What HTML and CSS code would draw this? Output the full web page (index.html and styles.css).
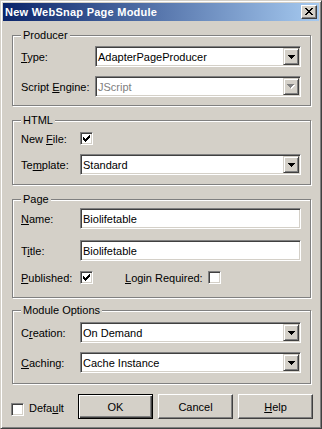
FILE: index.html
```html
<!doctype html>
<html>
    <head>
        <meta charset="utf-8">
        <title>New WebSnap Page Module</title>
        <link rel="stylesheet" href="styles.css">
    </head>
    <body>
        <div class="window">
            <div class="titlebar">
                <span class="title">New WebSnap Page Module</span>
                <div class="close">
                    <svg width="8" height="7" viewBox="0 0 8 7" shape-rendering="crispEdges"><path d="M0 0h2v1H0zM6 0h2v1H6zM1 1h2v1H1zM5 1h2v1H5zM2 2h4v1H2zM3 3h2v1H3zM2 4h4v1H2zM1 5h2v1H1zM5 5h2v1H5zM0 6h2v1H0zM6 6h2v1H6z"/></svg>
                </div>
            </div>
            <div class="content">
                <div class="group producer">
                    <span class="legend">Producer</span>
                    <div class="row">
                        <span class="lbl"><u>T</u>ype:</span>
                        <div class="combo">
                            <span class="val">AdapterPageProducer</span>
                            <div class="drop"><svg width="7" height="4" viewBox="0 0 7 4" shape-rendering="crispEdges"><path d="M0 0h7v1H0zM1 1h5v1H1zM2 2h3v1H2zM3 3h1v1H3z"/></svg></div>
                        </div>
                    </div>
                    <div class="row">
                        <span class="lbl">Script <u>E</u>ngine:</span>
                        <div class="combo disabled">
                            <span class="val">JScript</span>
                            <div class="drop"><svg width="8" height="5" viewBox="0 0 8 5" shape-rendering="crispEdges"><path fill="#fff" d="M1 1h7v1H1zM2 2h5v1H2zM3 3h3v1H3zM4 4h1v1H4z"/><path fill="#808080" d="M0 0h7v1H0zM1 1h5v1H1zM2 2h3v1H2zM3 3h1v1H3z"/></svg></div>
                        </div>
                    </div>
                </div>

                <div class="group html">
                    <span class="legend">HTML</span>
                    <div class="row">
                        <span class="lbl">New <u>F</u>ile:</span>
                        <div class="chk"><svg width="7" height="7" viewBox="0 0 7 7" shape-rendering="crispEdges"><path d="M0 2h1v3H0zM1 3h1v3H1zM2 4h1v3H2zM3 3h1v3H3zM4 2h1v3H4zM5 1h1v3H5zM6 0h1v3H6z"/></svg></div>
                    </div>
                    <div class="row">
                        <span class="lbl">Te<u>m</u>plate:</span>
                        <div class="combo">
                            <span class="val">Standard</span>
                            <div class="drop"><svg width="7" height="4" viewBox="0 0 7 4" shape-rendering="crispEdges"><path d="M0 0h7v1H0zM1 1h5v1H1zM2 2h3v1H2zM3 3h1v1H3z"/></svg></div>
                        </div>
                    </div>
                </div>

                <div class="group page">
                    <span class="legend">Page</span>
                    <div class="row">
                        <span class="lbl"><u>N</u>ame:</span>
                        <div class="edit">Biolifetable</div>
                    </div>
                    <div class="row">
                        <span class="lbl">T<u>i</u>tle:</span>
                        <div class="edit">Biolifetable</div>
                    </div>
                    <div class="row checks">
                        <span class="lbl"><u>P</u>ublished:</span>
                        <div class="chk"><svg width="7" height="7" viewBox="0 0 7 7" shape-rendering="crispEdges"><path d="M0 2h1v3H0zM1 3h1v3H1zM2 4h1v3H2zM3 3h1v3H3zM4 2h1v3H4zM5 1h1v3H5zM6 0h1v3H6z"/></svg></div>
                        <span class="lbl login"><u>L</u>ogin Required:</span>
                        <div class="chk"></div>
                    </div>
                </div>

                <div class="group module">
                    <span class="legend">Module Options</span>
                    <div class="row">
                        <span class="lbl">C<u>r</u>eation:</span>
                        <div class="combo">
                            <span class="val">On Demand</span>
                            <div class="drop"><svg width="7" height="4" viewBox="0 0 7 4" shape-rendering="crispEdges"><path d="M0 0h7v1H0zM1 1h5v1H1zM2 2h3v1H2zM3 3h1v1H3z"/></svg></div>
                        </div>
                    </div>
                    <div class="row">
                        <span class="lbl"><u>C</u>aching:</span>
                        <div class="combo">
                            <span class="val">Cache Instance</span>
                            <div class="drop"><svg width="7" height="4" viewBox="0 0 7 4" shape-rendering="crispEdges"><path d="M0 0h7v1H0zM1 1h5v1H1zM2 2h3v1H2zM3 3h1v1H3z"/></svg></div>
                        </div>
                    </div>
                </div>

                <div class="bottom">
                    <div class="chk low"></div>
                    <span class="default-lbl">Defa<u>u</u>lt</span>
                    <div class="buttons">
                        <div class="btn default">OK</div>
                        <div class="btn">Cancel</div>
                        <div class="btn"><u>H</u>elp</div>
                    </div>
                </div>
            </div>
        </div>
    </body>
</html>
```

FILE: styles.css
```css
body {
    margin: 0;
    font-family: "Liberation Sans", Arial, sans-serif;
    font-size: 11px;
    color: #000;
    background: #D4D0C8;
}
.window {
    width: 322px;
    height: 429px;
    box-sizing: border-box;
    background: #D4D0C8;
    border: 1px solid;
    border-color: #D4D0C8 #404040 #404040 #D4D0C8;
    box-shadow: inset 1px 1px 0 #fff, inset -1px -1px 0 #808080;
    padding: 2px;
    display: flex;
    flex-direction: column;
}
.titlebar {
    height: 18px;
    flex: none;
    display: flex;
    align-items: center;
    padding-left: 2px;
    background: linear-gradient(to right, #0A246A, #A6CAF0);
}
.title {
    color: #fff;
    font-weight: bold;
    letter-spacing: 0.25px;
}
.close {
    margin-left: auto;
    margin-right: 2px;
    width: 16px;
    height: 14px;
    box-sizing: border-box;
    background: #D4D0C8;
    border: 1px solid;
    border-color: #fff #404040 #404040 #fff;
    box-shadow: inset -1px -1px 0 #808080;
    display: flex;
    align-items: center;
    justify-content: center;
}
.close svg {
    margin: 0 1px 1px 0;
}
.content {
    flex: 1;
    display: flex;
    flex-direction: column;
}
.group {
    position: relative;
    margin: 14px 8px 0 9px;
    border: 1px solid #808080;
    box-shadow: inset 1px 1px 0 #fff, 1px 1px 0 #fff;
    display: flex;
    flex-direction: column;
}
.legend {
    position: absolute;
    top: -8px;
    left: 8px;
    padding: 0 2px;
    background: #D4D0C8;
    line-height: 14px;
}
.row {
    display: flex;
    align-items: center;
}
.lbl {
    width: 59px;
    flex: none;
}
.producer {
    padding: 10px 9px 8px 8px;
}
.producer .lbl {
    width: 74px;
}
.producer .row + .row,
.html .row + .row,
.module .row + .row {
    margin-top: 9px;
}
.html {
    padding: 11px 9px 9px 8px;
}
.page {
    padding: 8px 9px 13px 8px;
}
.page .row + .row {
    margin-top: 11px;
}
.page .row.checks {
    margin-top: 10px;
}
.module {
    margin-top: 12px;
    padding: 11px 9px 10px 8px;
}
.lbl.login {
    width: 83px;
    margin-left: 32px;
}
.combo,
.edit {
    flex: 1;
    height: 21px;
    box-sizing: border-box;
    border: 1px solid;
    border-color: #808080 #fff #fff #808080;
    box-shadow: inset 1px 1px 0 #404040, inset -1px -1px 0 #D4D0C8;
    background: #fff;
    padding: 1px;
    display: flex;
    align-items: center;
}
.combo .val {
    flex: 1;
    padding-left: 1px;
}
.edit {
    padding-left: 2px;
}
.combo.disabled .val {
    color: #808080;
}
.drop {
    width: 16px;
    height: 17px;
    box-sizing: border-box;
    background: #D4D0C8;
    border: 1px solid;
    border-color: #D4D0C8 #404040 #404040 #D4D0C8;
    box-shadow: inset 1px 1px 0 #fff, inset -1px -1px 0 #808080;
    display: flex;
    align-items: center;
    justify-content: center;
}
.chk {
    width: 13px;
    height: 13px;
    flex: none;
    box-sizing: border-box;
    border: 1px solid;
    border-color: #808080 #fff #fff #808080;
    box-shadow: inset 1px 1px 0 #404040, inset -1px -1px 0 #D4D0C8;
    background: #fff;
    padding: 2px;
}
.chk svg {
    display: block;
}
.bottom {
    margin-top: 10px;
    padding: 0 6px 0 8px;
    display: flex;
    align-items: center;
}
.chk.low {
    margin-top: 6px;
}
.default-lbl {
    margin-left: 5px;
    margin-top: 2px;
}
.buttons {
    margin-left: auto;
    display: flex;
    gap: 5px;
}
.btn {
    width: 75px;
    height: 25px;
    box-sizing: border-box;
    background: #D4D0C8;
    border: 1px solid;
    border-color: #fff #404040 #404040 #fff;
    box-shadow: inset -1px -1px 0 #808080;
    display: flex;
    align-items: center;
    justify-content: center;
}
.btn.default {
    border-color: #000;
    box-shadow: inset 1px 1px 0 #fff, inset -1px -1px 0 #404040, inset -2px -2px 0 #808080;
}
```
